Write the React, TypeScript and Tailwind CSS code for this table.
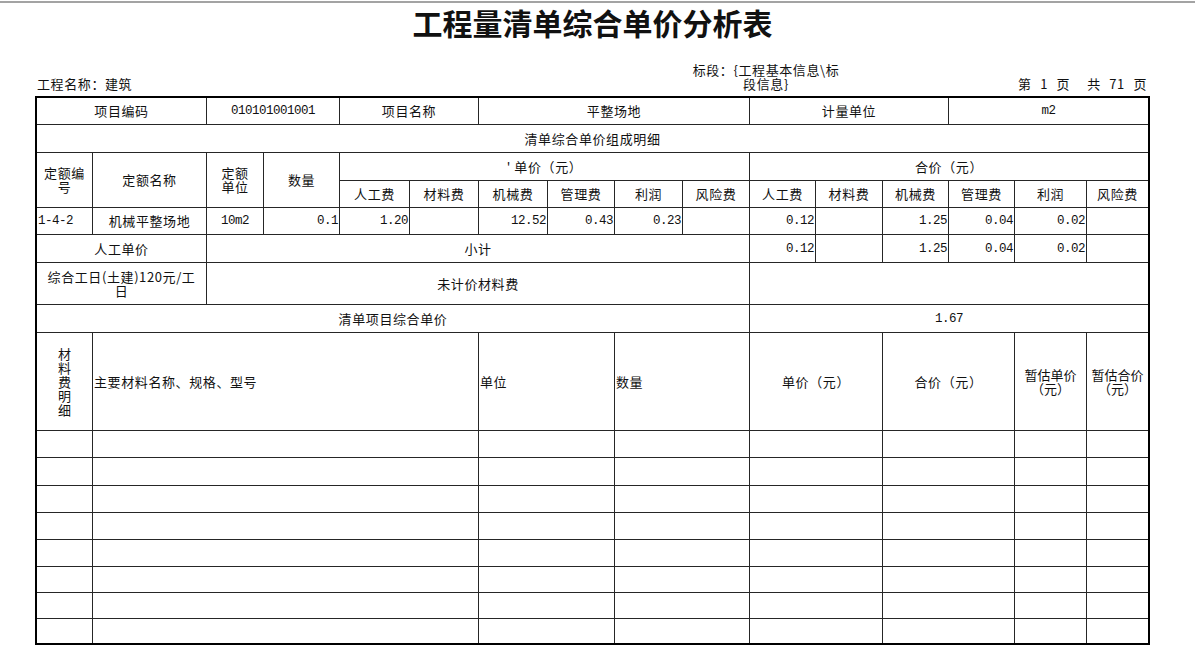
import React from "react";

const CJK = "font-['Noto_Sans_CJK_SC',sans-serif]";
const MONO = "font-['Liberation_Mono','Noto_Sans_CJK_SC',monospace] text-[12.5px] tracking-[-0.5px]";

type CellProps = {
  children?: React.ReactNode;
  className?: string;
  align?: "center" | "left" | "right";
  mono?: boolean;
};

function Cell({ children, className = "", align = "center", mono = false }: CellProps) {
  const a =
    align === "left"
      ? "justify-start text-left pl-[1px]"
      : align === "right"
      ? "justify-end text-right pr-[1px]"
      : "justify-center text-center";
  return (
    <div className={`bg-white flex items-center ${a} ${mono ? MONO : ""} ${className}`}>
      {children}
    </div>
  );
}

const feeHeads = ["人工费", "材料费", "机械费", "管理费", "利润", "风险费"];

export default function App() {
  return (
    <div className={`w-[1195px] h-[670px] bg-white text-[#111] ${CJK} text-[13px] tracking-[0.6px] leading-[14px] overflow-hidden`}>
      <div className="pt-px">
        <div className="h-[2px] bg-[#a3a3a3]" />
      </div>
      <div className="w-[1115px] ml-[35px]">
        <h1 className="mt-0 text-center text-[30px] leading-[38px] font-semibold tracking-normal text-[#111]">
          工程量清单综合单价分析表
        </h1>
        <div className="mt-[22px] flex items-end h-[28px]">
          <div className="w-[640px] pl-[2px]">工程名称：建筑</div>
          <div className="w-[182px] text-center">
            标段：{"{"}工程基本信息\标
            <br />
            段信息{"}"}
          </div>
          <div className="flex-1 text-right pr-[3px] whitespace-pre [word-spacing:5px]">第 1 页  共 71 页</div>
        </div>
        <div className="mt-[5px] grid gap-px bg-[#262626] border-2 border-black grid-cols-[55px_113px_56px_75px_69px_68px_68px_66px_67px_66px_65px_66px_65px_65px_71px_61px] grid-rows-[26px_27px_27px_26px_26px_27px_41px_27px_97px_26px_27px_26px_26px_26px_25px_25px_24px]">
          {/* row 1 */}
          <Cell className="col-span-2">项目编码</Cell>
          <Cell className="col-span-2" mono>010101001001</Cell>
          <Cell className="col-span-2">项目名称</Cell>
          <Cell className="col-span-4">平整场地</Cell>
          <Cell className="col-span-3">计量单位</Cell>
          <Cell className="col-span-3" mono>m2</Cell>
          {/* row 2 */}
          <Cell className="col-span-16">清单综合单价组成明细</Cell>
          {/* row 3 */}
          <Cell className="row-span-2">
            定额编
            <br />号
          </Cell>
          <Cell className="row-span-2">定额名称</Cell>
          <Cell className="row-span-2">
            定额
            <br />
            单位
          </Cell>
          <Cell className="row-span-2">数量</Cell>
          <Cell className="col-span-6">' 单价（元）</Cell>
          <Cell className="col-span-6">合价（元）</Cell>
          {/* row 4 */}
          {feeHeads.map((h) => (
            <Cell key={"u" + h}>{h}</Cell>
          ))}
          {feeHeads.map((h) => (
            <Cell key={"t" + h}>{h}</Cell>
          ))}
          {/* row 5 */}
          <Cell align="left" mono>1-4-2</Cell>
          <Cell>机械平整场地</Cell>
          <Cell mono>10m2</Cell>
          <Cell align="right" mono>0.1</Cell>
          <Cell align="right" mono>1.20</Cell>
          <Cell />
          <Cell align="right" mono>12.52</Cell>
          <Cell align="right" mono>0.43</Cell>
          <Cell align="right" mono>0.23</Cell>
          <Cell />
          <Cell align="right" mono>0.12</Cell>
          <Cell />
          <Cell align="right" mono>1.25</Cell>
          <Cell align="right" mono>0.04</Cell>
          <Cell align="right" mono>0.02</Cell>
          <Cell />
          {/* row 6 */}
          <Cell className="col-span-2">人工单价</Cell>
          <Cell className="col-span-8">小计</Cell>
          <Cell align="right" mono>0.12</Cell>
          <Cell />
          <Cell align="right" mono>1.25</Cell>
          <Cell align="right" mono>0.04</Cell>
          <Cell align="right" mono>0.02</Cell>
          <Cell />
          {/* row 7 */}
          <Cell className="col-span-2">
            综合工日(土建)120元/工
            <br />日
          </Cell>
          <Cell className="col-span-8">未计价材料费</Cell>
          <Cell className="col-span-6" />
          {/* row 8 */}
          <Cell className="col-span-10">清单项目综合单价</Cell>
          <Cell className="col-span-6" mono>1.67</Cell>
          {/* row 9 */}
          <Cell>
            <div className="w-[14px] leading-[14px] tracking-normal text-center">材料费明细</div>
          </Cell>
          <Cell className="col-span-5" align="left">主要材料名称、规格、型号</Cell>
          <Cell className="col-span-2" align="left">单位</Cell>
          <Cell className="col-span-2" align="left">数量</Cell>
          <Cell className="col-span-2">单价（元）</Cell>
          <Cell className="col-span-2">合价（元）</Cell>
          <Cell className="tracking-normal">
            暂估单价
            <br />
            （元）
          </Cell>
          <Cell className="tracking-normal">
            暂估合价
            <br />
            （元）
          </Cell>
          {/* empty material rows */}
          {Array.from({ length: 8 }).map((_, i) => (
            <React.Fragment key={i}>
              <Cell />
              <Cell className="col-span-5" />
              <Cell className="col-span-2" />
              <Cell className="col-span-2" />
              <Cell className="col-span-2" />
              <Cell className="col-span-2" />
              <Cell />
              <Cell />
            </React.Fragment>
          ))}
        </div>
      </div>
    </div>
  );
}
